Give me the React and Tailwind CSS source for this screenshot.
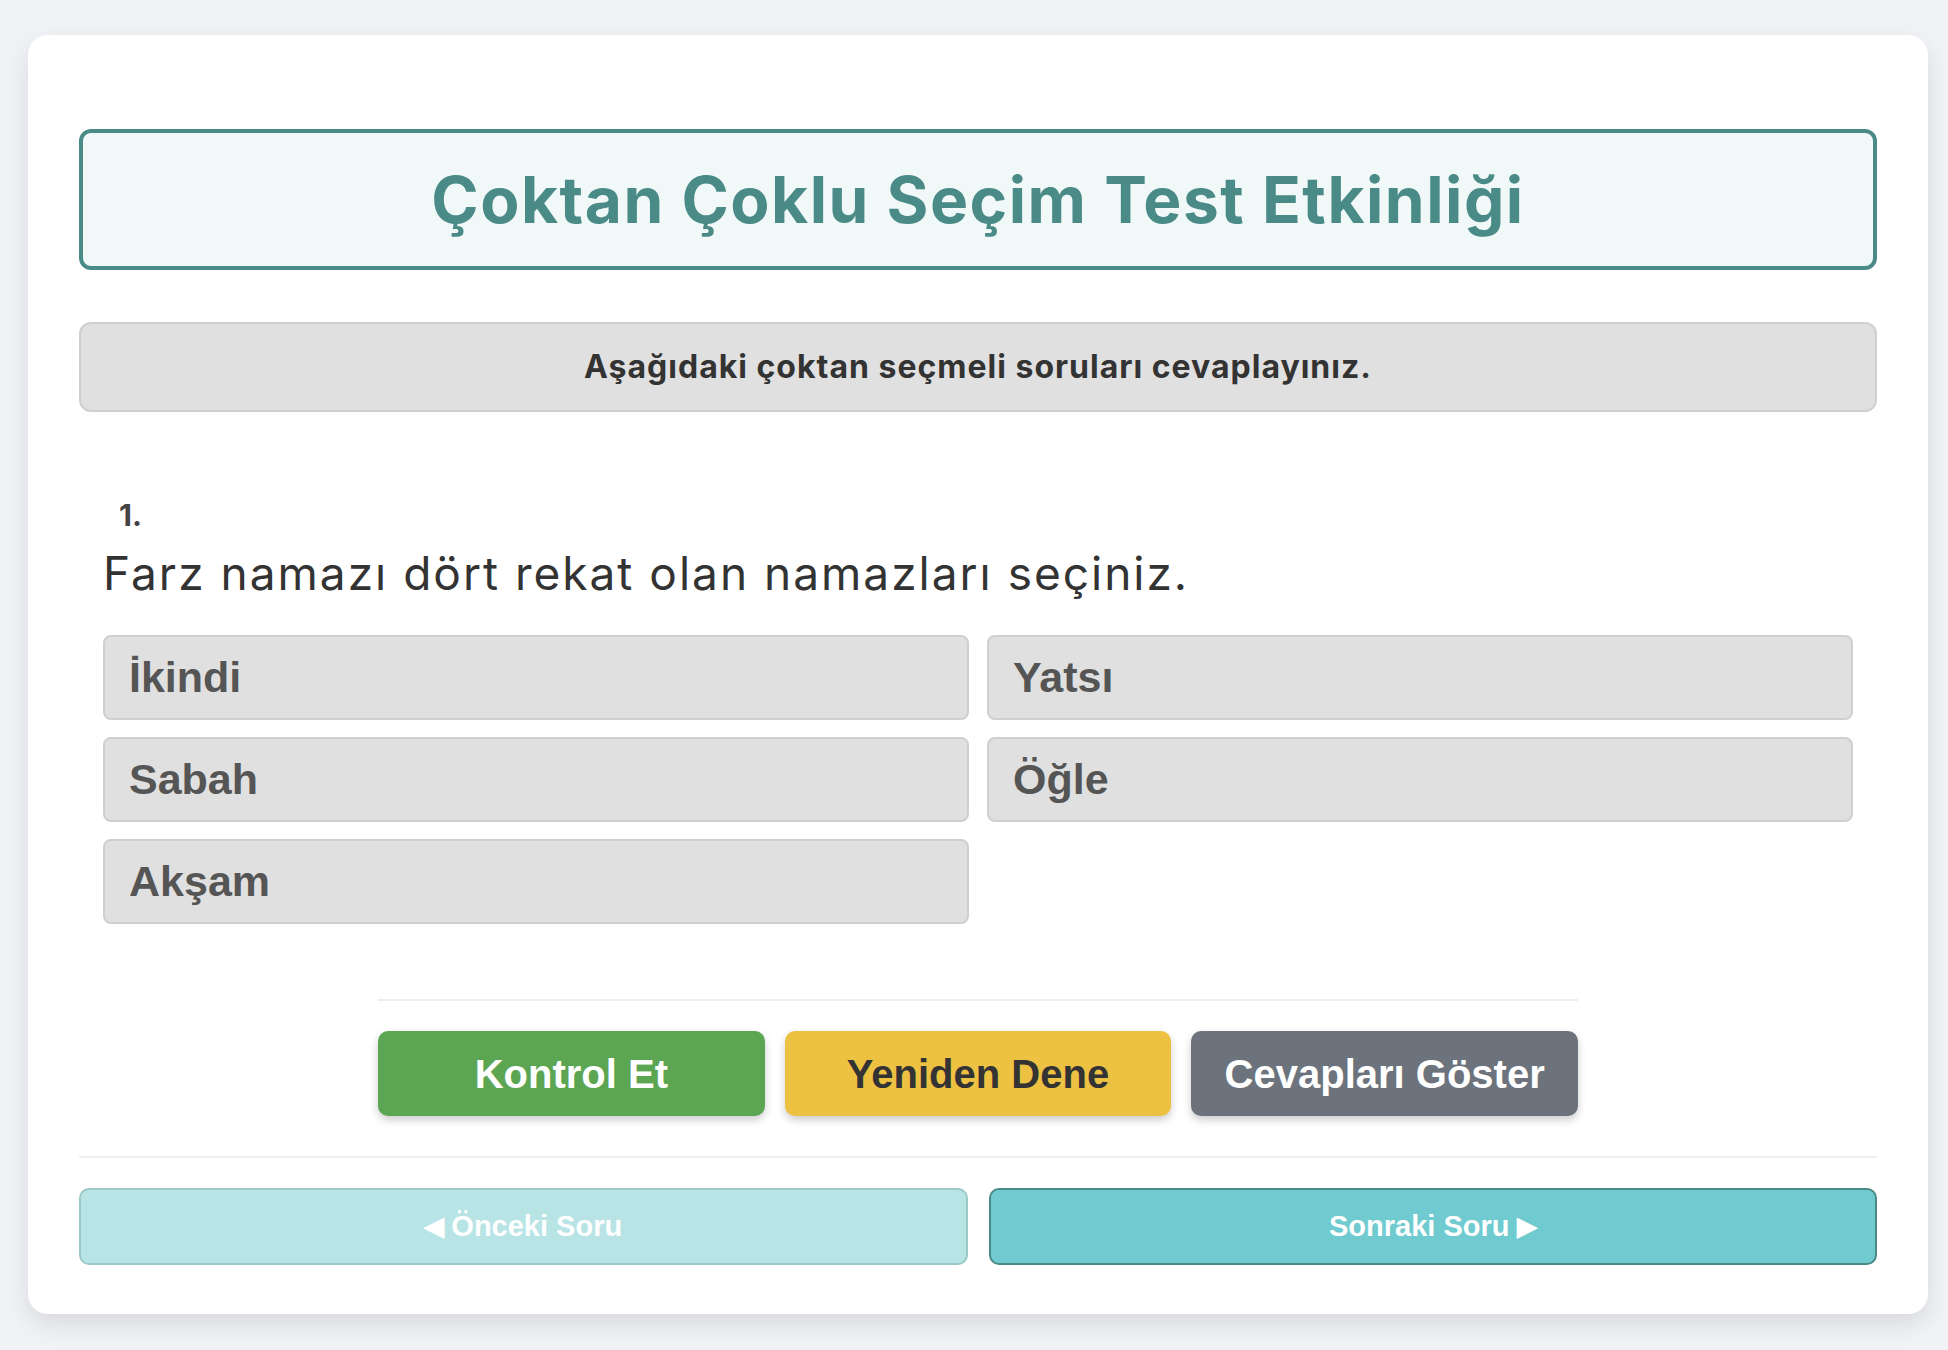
export default function App() {
  const options = ["İkindi", "Yatsı", "Sabah", "Öğle", "Akşam"];
  return (
    <div className="min-h-screen bg-[#f0f2f5] pt-[35px] pb-[36px] pl-[28px]">
      <div className="w-[1900px] bg-white rounded-[20px] shadow-[0_10px_25px_rgba(0,0,0,0.10)] px-[51px] pt-[94px] pb-[49px]">
        <div className="h-[141px] border-4 border-[#4a8a87] bg-[#f0f9f8] rounded-[12px] flex items-center justify-center">
          <h1 className="font-['Inter',sans-serif] font-bold text-[64px] tracking-[1.5px] leading-none text-[#4a8a87]">
            Çoktan Çoklu Seçim Test Etkinliği
          </h1>
        </div>
        <div className="mt-[52px] h-[90px] bg-[#e0e0e0] border-2 border-[#cfcfcf] rounded-[12px] flex items-center justify-center">
          <p className="font-['Inter',sans-serif] font-bold text-[32px] tracking-[1px] text-[#333]">
            Aşağıdaki çoktan seçmeli soruları cevaplayınız.
          </p>
        </div>
        <div className="px-[24px]">
          <div className="mt-[83px] h-[40px] leading-[40px] pl-[16px] font-['Inter',sans-serif] font-bold text-[30px] text-[#444]">
            1.
          </div>
          <div className="mt-[8px] h-[60px] leading-[60px] font-['Inter',sans-serif] text-[46px] tracking-[2px] text-[#333]">
            Farz namazı dört rekat olan namazları seçiniz.
          </div>
          <div className="mt-[32px] grid grid-cols-2 gap-x-[18px] gap-y-[17px]">
            {options.map((o) => (
              <div
                key={o}
                className="h-[85px] bg-[#e0e0e0] border-2 border-[#cfcfcf] rounded-[8px] flex items-center pl-[24px] font-['Liberation_Sans',Arial,sans-serif] font-bold text-[43px] text-[#555]"
              >
                {o}
              </div>
            ))}
          </div>
        </div>
        <div className="w-[1200px] mx-auto mt-[75px] border-t-2 border-[#eeeeee] pt-[30px] flex gap-[20px]">
          <button className="flex-1 h-[85px] rounded-[10px] bg-[#5ca552] text-white font-['Liberation_Sans',Arial,sans-serif] font-bold text-[40px] shadow-[0_4px_8px_rgba(0,0,0,0.2)]">
            Kontrol Et
          </button>
          <button className="flex-1 h-[85px] rounded-[10px] bg-[#edc142] text-[#333] font-['Liberation_Sans',Arial,sans-serif] font-bold text-[40px] shadow-[0_4px_8px_rgba(0,0,0,0.2)]">
            Yeniden Dene
          </button>
          <button className="flex-1 h-[85px] rounded-[10px] bg-[#6c737c] text-white font-['Liberation_Sans',Arial,sans-serif] font-bold text-[40px] shadow-[0_4px_8px_rgba(0,0,0,0.2)]">
            Cevapları Göster
          </button>
        </div>
        <div className="mt-[40px] h-[2px] bg-[#eeeeee]" />
        <div className="mt-[30px] grid grid-cols-2 gap-[21px]">
          <button className="h-[77px] rounded-[10px] bg-[#b8e4e6] border-2 border-[#9cc8c8] text-white font-['Liberation_Sans',Arial,sans-serif] font-bold text-[29px] flex items-center justify-center gap-[7px]">
            <span className="text-[26px]">◀</span>
            <span>Önceki Soru</span>
          </button>
          <button className="h-[77px] rounded-[10px] bg-[#6fcbd0] border-2 border-[#4a8a87] text-white font-['Liberation_Sans',Arial,sans-serif] font-bold text-[29px] flex items-center justify-center gap-[7px]">
            <span>Sonraki Soru</span>
            <span className="text-[26px]">▶</span>
          </button>
        </div>
      </div>
    </div>
  );
}
